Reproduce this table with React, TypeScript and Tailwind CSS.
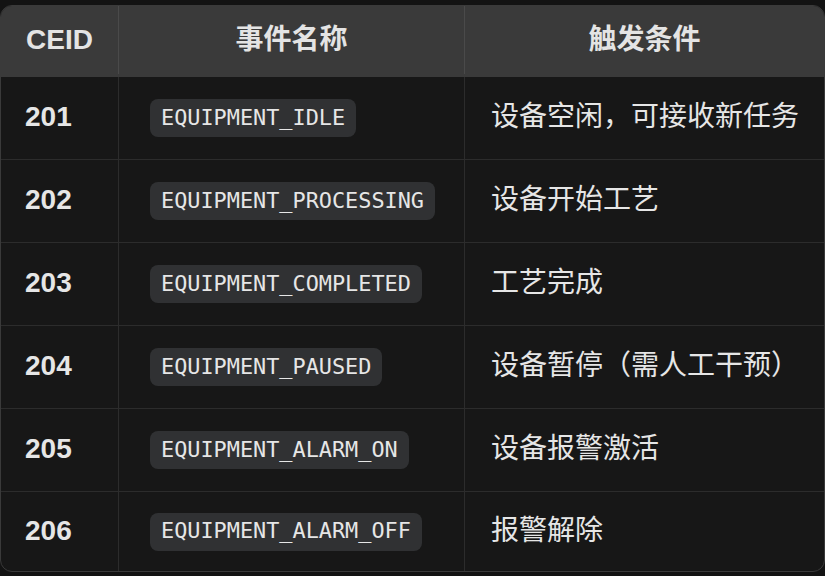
const rows = [
  { id: '201', name: 'EQUIPMENT_IDLE', cond: '设备空闲，可接收新任务' },
  { id: '202', name: 'EQUIPMENT_PROCESSING', cond: '设备开始工艺' },
  { id: '203', name: 'EQUIPMENT_COMPLETED', cond: '工艺完成' },
  { id: '204', name: 'EQUIPMENT_PAUSED', cond: '设备暂停（需人工干预）' },
  { id: '205', name: 'EQUIPMENT_ALARM_ON', cond: '设备报警激活' },
  { id: '206', name: 'EQUIPMENT_ALARM_OFF', cond: '报警解除' },
]

const sans = "font-['Liberation_Sans','Noto_Sans_CJK_SC',sans-serif]"

export default function App() {
  return (
    <div className={`min-h-screen bg-[#131313] pt-[5px] ${sans}`}>
      <div className="w-[825px] overflow-hidden rounded-[12px] border border-[#3a3a3a] bg-[#171717]">
        {/* Header */}
        <div className="grid h-[71px] grid-cols-[118px_346px_1fr] bg-[#3a3a3a] pb-[3px] text-[28px] font-bold text-[#e4e4e4]">
          <div className="flex items-center justify-center border-r border-[#4a4a4a]">CEID</div>
          <div className="flex items-center justify-center border-r border-[#4a4a4a]">事件名称</div>
          <div className="flex items-center justify-center">触发条件</div>
        </div>

        {/* Rows */}
        {rows.map((r, i) => (
          <div
            key={r.id}
            className={`grid grid-cols-[118px_346px_1fr] ${i === rows.length - 1 ? 'h-[79px]' : 'h-[83px] border-b border-[#2c2c2c]'}`}
          >
            <div className="flex items-center border-r border-[#2c2c2c] pb-[2px] pl-[24px] text-[28px] font-bold text-[#e6e6e6]">
              {r.id}
            </div>
            <div className="flex items-center border-r border-[#2c2c2c] pl-[31px]">
              <code className="flex h-[38px] items-center rounded-[8px] bg-[#303133] px-[11px] font-['DejaVu_Sans_Mono',monospace] text-[21.85px] text-[#e6e6e6]">
                {r.name}
              </code>
            </div>
            <div className="flex items-center pb-[2px] pl-[26px] text-[28px] text-[#e6e6e6]">
              {r.cond}
            </div>
          </div>
        ))}
      </div>
    </div>
  )
}
